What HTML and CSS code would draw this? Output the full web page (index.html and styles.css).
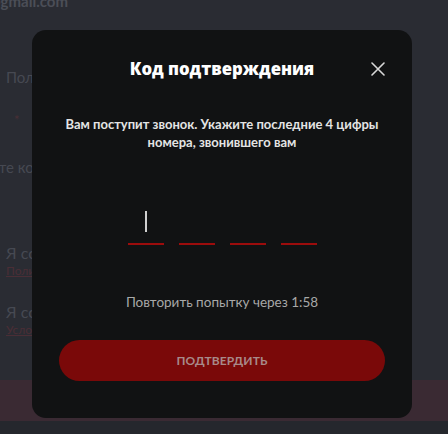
FILE: index.html
```html
<!DOCTYPE html>
<html lang="ru">
<head>
<meta charset="utf-8">
<link rel="stylesheet" href="styles.css">
</head>
<body>
<div class="page">
  <div class="bg-content">
    <div class="bg-email">ivanov@gmail.com</div>
    <div class="bg-label bg-get">Получить код</div>
    <div class="bg-star">*</div>
    <div class="bg-label bg-code">Введите код</div>
    <div class="bg-check">Я согласен с условиями</div>
    <div class="bg-link">Политика</div>
    <div class="bg-check bg-check2">Я согласен на рассылку</div>
    <div class="bg-link">Условия</div>
  </div>
  <div class="bg-band"></div>
  <div class="bg-bottom"></div>

  <div class="modal">
    <div class="modal-head">
      <h1 class="modal-title">Код подтверждения</h1>
      <button class="modal-close" aria-label="Закрыть">
        <svg width="14" height="14" viewBox="0 0 14 14"><path d="M1 1L13 13M13 1L1 13" stroke="#d8d8d8" stroke-width="1.6" stroke-linecap="round"/></svg>
      </button>
    </div>
    <p class="modal-text">Вам поступит звонок. Укажите последние 4 цифры<br>номера, звонившего вам</p>
    <div class="code-row">
      <div class="code-cell active"><span class="caret"></span></div>
      <div class="code-cell"></div>
      <div class="code-cell"></div>
      <div class="code-cell"></div>
    </div>
    <div class="retry">Повторить попытку через 1:58</div>
    <button class="confirm">ПОДТВЕРДИТЬ</button>
  </div>
</div>
</body>
</html>
```
FILE: styles.css
```css
* { box-sizing: border-box; }
html { background: #25272d; }
html, body { margin: 0; padding: 0; }
body {
  width: 448px;
  min-height: 434px;
  background: #25272d;
  font-family: Lato, "Noto Sans", sans-serif;
}
.page {
  position: relative;
  width: 448px;
  height: 434px;
  overflow: hidden;
  background: #25272d;
  display: flex;
  flex-direction: column;
}
.bg-content {
  height: 380px;
  flex-shrink: 0;
  overflow: hidden;
  padding: 0 6px;
  background: #2a2c33;
  color: #464952;
  font-size: 15px;
  display: flex;
  flex-direction: column;
}
.bg-email {
  margin-top: -9px;
  margin-left: -62px;
  font-size: 15px;
  font-weight: 700;
  color: #4b4e57;
  line-height: 20px;
  white-space: nowrap;
}
.bg-label {
  font-size: 15px;
  line-height: 18px;
  white-space: nowrap;
}
.bg-get { margin-top: 57px; }
.bg-star { color: #4a2f36; margin: 26px 0 0 8px; font-size: 13px; line-height: 16px; }
.bg-code { margin-top: 30px; margin-left: -50px; }
.bg-check { margin-top: 68px; font-size: 16px; line-height: 18px; white-space: nowrap; }
.bg-check2 { margin-top: 24px; }
.bg-link {
  margin-top: 1px;
  font-size: 12px;
  line-height: 16px;
  color: #4a2e36;
  text-decoration: underline;
}
.bg-band {
  height: 41px;
  flex-shrink: 0;
  background: #3a2a33;
}
.bg-bottom {
  flex: 1;
  background: #25272d;
}

.modal {
  position: absolute;
  left: 32px;
  top: 30px;
  width: 380px;
  height: 388px;
  background: #111213;
  border-radius: 14px;
  display: flex;
  flex-direction: column;
  align-items: center;
  padding: 29px 27px 0;
}
.modal-head {
  position: relative;
  width: 100%;
  display: flex;
  justify-content: center;
}
.modal-title {
  margin: 0;
  font-family: "Open Sans", Lato, sans-serif;
  font-weight: 800;
  font-size: 16.7px;
  line-height: 20px;
  color: #ffffff;
}
.modal-close {
  position: absolute;
  right: 0;
  top: 3px;
  width: 14px;
  height: 14px;
  padding: 0;
  border: 0;
  background: none;
  display: flex;
}
.modal-text {
  margin: 36px 0 0;
  text-align: center;
  font-size: 13px;
  line-height: 18px;
  font-weight: 700;
  color: #e4e4e4;
  white-space: nowrap;
}
.code-row {
  margin-top: 60px;
  display: flex;
  gap: 15px;
}
.code-cell {
  width: 36px;
  height: 34px;
  border-bottom: 2px solid #9c0c0c;
  display: flex;
  justify-content: center;
}
.caret {
  width: 2px;
  height: 21px;
  background: #d0d0d0;
}
.retry {
  margin-top: 48px;
  font-size: 13.5px;
  line-height: 18px;
  color: #a8a8a8;
}
.confirm {
  margin-top: 29px;
  width: 326px;
  height: 41px;
  border: 0;
  border-radius: 21px;
  background: #7a0909;
  color: #a88a8a;
  font-family: Lato, sans-serif;
  font-weight: 700;
  font-size: 12px;
  letter-spacing: 0.1px;
}
```
